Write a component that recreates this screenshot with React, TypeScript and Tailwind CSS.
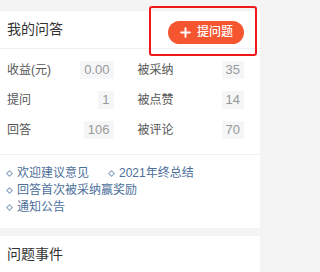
import { Plus } from "lucide-react";

const stats = [
  [
    { label: "收益(元)", value: "0.00" },
    { label: "被采纳", value: "35" },
  ],
  [
    { label: "提问", value: "1" },
    { label: "被点赞", value: "14" },
  ],
  [
    { label: "回答", value: "106" },
    { label: "被评论", value: "70" },
  ],
];

const Stat = ({ label, value }: { label: string; value: string }) => (
  <div className="flex items-center justify-between h-[18px]">
    <span className="text-[12px] leading-[18px] text-[#555]">{label}</span>
    <span className="bg-[#f5f6f7] px-[4px] h-[18px] leading-[18px] text-[13px] text-[#999]">{value}</span>
  </div>
);

const Bullet = ({ text, className = "" }: { text: string; className?: string }) => (
  <span className={`flex items-center gap-[5px] text-[12px] text-[#4d6f9b] leading-[17px] ${className}`}>
    <span className="w-[5px] h-[5px] border border-[#8aa2c0] rotate-45 ml-[1px]"></span>
    {text}
  </span>
);

export default function App() {
  return (
    <div
      className="relative w-[320px] h-[272px] bg-[#f4f4f4] pt-[11px] overflow-hidden"
      style={{ fontFamily: '"Liberation Sans", "Noto Sans CJK SC", sans-serif' }}
    >
      <div className="w-[260px] bg-white">
        <div className="flex items-center justify-between h-[38px] pl-[7px] pr-[16px] border-b border-[#f0f0f0]">
          <h2 className="text-[14px] text-[#333]">我的问答</h2>
          <button className="flex items-center gap-[4px] h-[23px] mt-[5px] pl-[10px] pr-[11px] rounded-full bg-[#f5562f] text-white text-[12px] font-medium">
            <Plus size={15} strokeWidth={3} />
            提问题
          </button>
        </div>
        <div className="flex flex-col gap-[12px] pt-[12px] pb-[15px] pl-[7px] pr-[16px] border-b border-[#f0f0f0]">
          {stats.map((row, i) => (
            <div key={i} className="grid grid-cols-2 gap-x-[24px]">
              <Stat {...row[0]} />
              <Stat {...row[1]} />
            </div>
          ))}
        </div>
        <div className="flex flex-col pl-[6px] pt-[10px] pb-[12px]">
          <div className="flex">
            <Bullet text="欢迎建议意见" className="w-[102px]" />
            <Bullet text="2021年终总结" />
          </div>
          <Bullet text="回答首次被采纳赢奖励" />
          <Bullet text="通知公告" />
        </div>
      </div>
      <div className="w-[260px] bg-white mt-[8px] h-[40px] pl-[7px] pt-[8px]">
        <h2 className="text-[14px] leading-[20px] text-[#333]">问题事件</h2>
      </div>
      <div className="absolute left-[149px] top-[6px] w-[108px] h-[50px] border-2 border-[#f01818] rounded-[3px]"></div>
    </div>
  );
}
